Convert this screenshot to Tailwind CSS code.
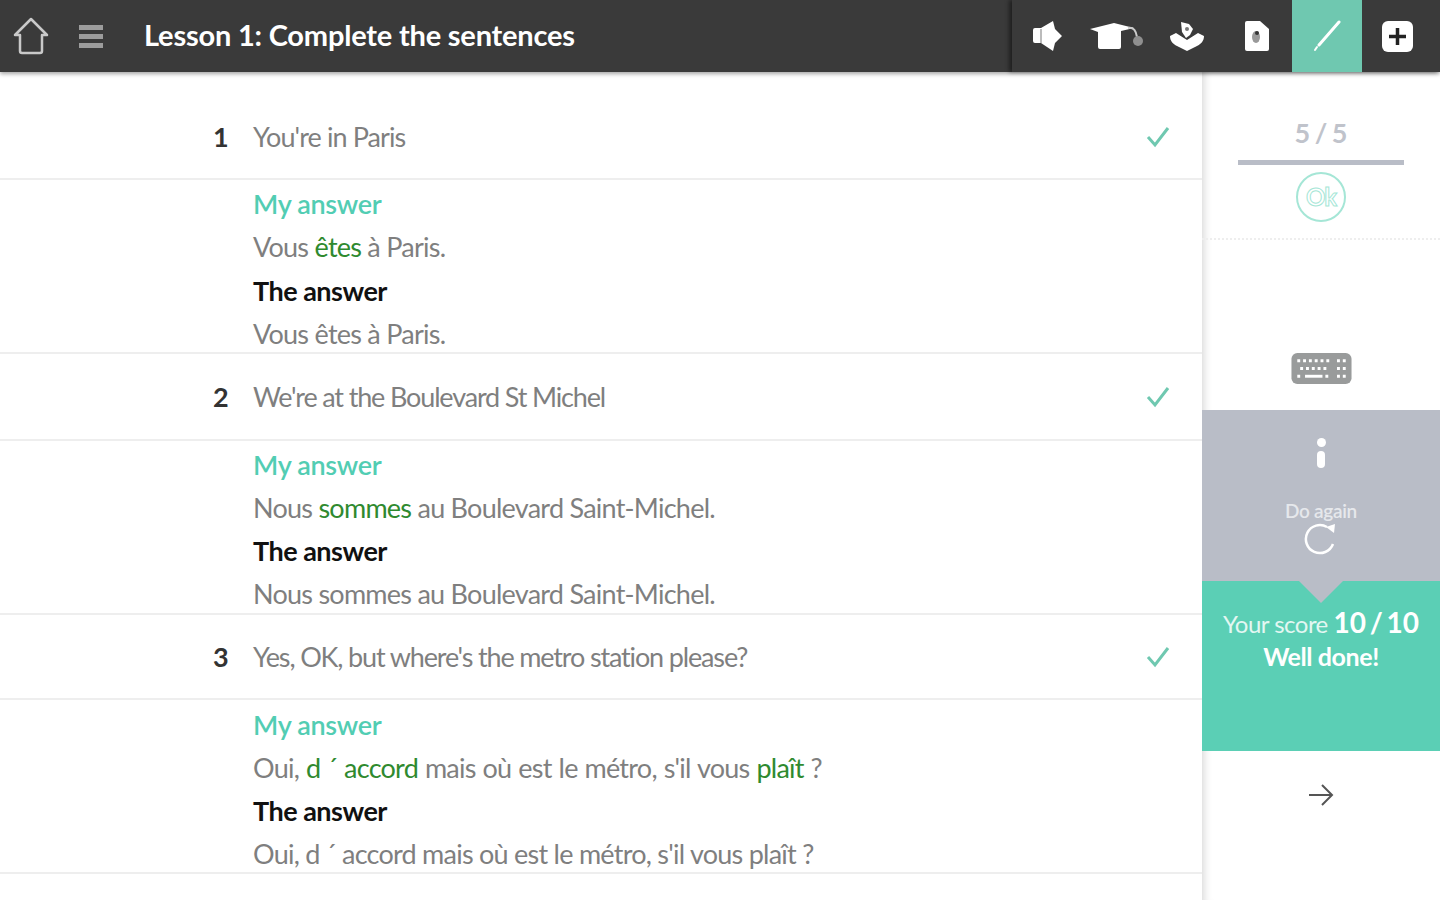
<!DOCTYPE html>
<html lang="en">
<head>
  <meta charset="UTF-8" />
  <title>Lesson 1: Complete the sentences</title>
  <script src="https://cdn.jsdelivr.net/npm/@tailwindcss/browser@4"></script>
</head>
<body class="bg-white font-['Lato',sans-serif] h-[900px] w-[1440px] overflow-hidden">
  <!-- Top bar -->
  <header class="relative z-10 flex h-[72px] bg-[#3a3a3a] shadow-[0_2px_4px_rgba(0,0,0,0.35)]">
    <div class="flex flex-1 items-center">
      <svg class="ml-[13px] w-[36px] h-[38px]" viewBox="0 0 36 38" fill="none" stroke="#c9c9c9" stroke-width="2.5" stroke-linejoin="round"><path d="M2 18 18 2l16 16h-5v16a2 2 0 0 1-2 2H9a2 2 0 0 1-2-2V18z"/></svg>
      <div class="ml-[30px] w-[24px] flex flex-col gap-[4px]">
        <div class="h-[5px] bg-[#9c9c9c]"></div>
        <div class="h-[5px] bg-[#9c9c9c]"></div>
        <div class="h-[5px] bg-[#9c9c9c]"></div>
      </div>
      <h1 class="ml-[41px] text-[29px] font-bold text-white tracking-[-0.2px] -mt-[2px]">Lesson 1: Complete the sentences</h1>
    </div>
    <nav class="flex w-[428px] shadow-[-3px_0_4px_rgba(0,0,0,0.45)]">
      <div class="w-[70px] flex items-center justify-center">
        <svg class="w-[30px] h-[30px]" viewBox="0 0 30 30" fill="#fff"><path d="M1 9a2 2 0 0 1 2-2h6l12-7 2 8 7 7-7 7-2 8-12-8H3a2 2 0 0 1-2-2z"/><path fill="#bbb" d="M8 8h2v14H8z"/></svg>
      </div>
      <div class="w-[70px] flex items-center justify-center">
        <svg class="w-[55px] h-[28px]" viewBox="0 0 55 28"><path fill="#fff" d="M0 7 24 1l20 5-13 3v16a2 2 0 0 1-2 2H10a2 2 0 0 1-2-2V10z"/><path fill="none" stroke="#ccc" stroke-width="2" d="M38 6c6-1 8 3 9 9"/><circle cx="48" cy="19" r="5" fill="#8f8f8f"/></svg>
      </div>
      <div class="w-[70px] flex items-center justify-center">
        <svg class="w-[34px] h-[30px]" viewBox="0 0 34 30"><path fill="#fff" d="M0 15l6-3 11 7 11-7 6 3c0 5-3 8-7 10l-10 5-10-5C3 23 0 20 0 15z"/><path fill="#fff" d="M11 1l8 2 4 5-3 6-4 3-4-6z"/><circle cx="17" cy="8" r="2" fill="#777"/></svg>
      </div>
      <div class="w-[70px] flex items-center justify-center">
        <svg class="w-[24px] h-[30px]" viewBox="0 0 24 30"><path fill="#fff" d="M2 0h13l9 8v20a2 2 0 0 1-2 2H2a2 2 0 0 1-2-2V2a2 2 0 0 1 2-2z"/><ellipse cx="11" cy="16" rx="4" ry="6" fill="#999"/><circle cx="12" cy="12" r="2" fill="#333"/></svg>
      </div>
      <div class="w-[70px] flex items-center justify-center bg-[#6fc8b0]">
        <svg class="w-[30px] h-[32px]" viewBox="0 0 30 32" fill="none" stroke="#fff" stroke-linecap="round"><path stroke-width="3" d="M27 2 7 25"/><path stroke-width="2" d="M5 27l-2 3"/></svg>
      </div>
      <div class="w-[70px] flex items-center justify-center">
        <div class="w-[31px] h-[31px] rounded-[6px] bg-white flex items-center justify-center">
          <svg class="w-[19px] h-[19px]" viewBox="0 0 19 19" stroke="#222" stroke-width="3.5"><path d="M9.5 1v17M1 9.500h17"/></svg>
        </div>
      </div>
    </nav>
  </header>

  <div class="flex h-[828px]">
    <!-- Corrections list -->
    <main class="w-[1202px] text-[27px] leading-[34px] tracking-[-0.75px] text-[#7f7f7f]">
      <section>
        <div class="flex items-center h-[108px] pl-[213px] pr-[32px] pt-[24px] border-b-2 border-[#eeeeee]">
          <span class="w-[40px] font-bold text-[#333]">1</span>
          <span class="flex-1 tracking-[-0.9px]">You're in Paris</span>
          <svg class="w-[24px] h-[22px]" viewBox="0 0 24 22" fill="none" stroke="#6fc8b0" stroke-width="3"><path d="M2 11l7 8L22 2"/></svg>
        </div>
        <div class="h-[174px] pl-[253px] pt-[7px] flex flex-col gap-[9px] border-b-2 border-[#eeeeee]">
          <div class="font-semibold text-[#52cdb3] tracking-[-0.3px]">My answer</div>
          <div>Vous <span class="text-[#2f8a2f]">êtes</span> à Paris.</div>
          <div class="mt-[1px] font-bold text-[#111] tracking-[-0.5px]">The answer</div>
          <div>Vous êtes à Paris.</div>
        </div>
      </section>
      <section>
        <div class="flex items-center h-[87px] pl-[213px] pr-[32px] border-b-2 border-[#eeeeee]">
          <span class="w-[40px] font-bold text-[#333]">2</span>
          <span class="flex-1 tracking-[-1.15px]">We're at the Boulevard St Michel</span>
          <svg class="w-[24px] h-[22px]" viewBox="0 0 24 22" fill="none" stroke="#6fc8b0" stroke-width="3"><path d="M2 11l7 8L22 2"/></svg>
        </div>
        <div class="h-[174px] pl-[253px] pt-[7px] flex flex-col gap-[9px] border-b-2 border-[#eeeeee]">
          <div class="font-semibold text-[#52cdb3] tracking-[-0.3px]">My answer</div>
          <div>Nous <span class="text-[#2f8a2f]">sommes</span> au Boulevard Saint-Michel.</div>
          <div class="font-bold text-[#111] tracking-[-0.5px]">The answer</div>
          <div>Nous sommes au Boulevard Saint-Michel.</div>
        </div>
      </section>
      <section>
        <div class="flex items-center h-[85px] pl-[213px] pr-[32px] border-b-2 border-[#eeeeee]">
          <span class="w-[40px] font-bold text-[#333]">3</span>
          <span class="flex-1 tracking-[-1.15px]">Yes, OK, but where's the metro station please?</span>
          <svg class="w-[24px] h-[22px]" viewBox="0 0 24 22" fill="none" stroke="#6fc8b0" stroke-width="3"><path d="M2 11l7 8L22 2"/></svg>
        </div>
        <div class="h-[174px] pl-[253px] pt-[8px] flex flex-col gap-[9px] border-b-2 border-[#eeeeee]">
          <div class="font-semibold text-[#52cdb3] tracking-[-0.3px]">My answer</div>
          <div class="[word-spacing:0.7px]">Oui, <span class="text-[#2f8a2f]">d ´ accord</span> mais où est le métro, s'il vous <span class="text-[#2f8a2f]">plaît</span> ?</div>
          <div class="font-bold text-[#111] tracking-[-0.5px]">The answer</div>
          <div>Oui, d ´ accord mais où est le métro, s'il vous plaît ?</div>
        </div>
      </section>
    </main>

    <!-- Side panel -->
    <aside class="w-[238px] flex flex-col shadow-[inset_10px_0_8px_-8px_rgba(0,0,0,0.16)]">
      <div class="h-[168px] flex flex-col items-center border-b-2 border-dotted border-[#eeeeee]">
        <div class="mt-[44px] h-[34px] leading-[34px] text-[27px] font-bold text-[#c0c3cb] [word-spacing:-2px]">5 / 5</div>
        <div class="w-[166px] h-[5px] mt-[10px] bg-[#b9bdc7]"></div>
        <div class="mt-[7px] w-[50px] h-[50px] rounded-full border-2 border-[#a5e6d6] flex items-center justify-center text-[24px] font-bold text-white [-webkit-text-stroke:1px_#a5e6d6] tracking-[-1px]">Ok</div>
      </div>
      <div class="h-[170px] flex items-center justify-center pt-[86px]">
        <svg class="w-[61px] h-[31px]" viewBox="0 0 62 32">
          <rect width="62" height="32" rx="6" fill="#999b9b"/>
          <path stroke="#fff" stroke-width="3" stroke-dasharray="3 3" d="M6 8h36M9 16h30M6 24h3M35 24h4M47 8h10M47 16h10M47 24h10"/>
          <path stroke="#fff" stroke-width="3" d="M14 24h18"/>
        </svg>
      </div>
      <div class="h-[171px] bg-[#b9bdc7] flex flex-col items-center text-white">
        <div class="mt-[28px] w-[9px] h-[9px] rounded-full bg-white"></div>
        <div class="mt-[4px] w-[8px] h-[17px] rounded-full bg-white"></div>
        <div class="mt-[31px] h-[24px] leading-[24px] text-[19px] font-semibold text-[#e6e8ec] tracking-[-0.3px]">Do again</div>
        <svg class="w-[36px] h-[34px] -mt-[2px]" viewBox="0 0 36 34" fill="none" stroke="#fff" stroke-width="2.500"><path d="M30 23A14 14 0 1 1 24 6"/><path fill="#fff" stroke="none" d="M23 6l9-3-1 9z"/></svg>
      </div>
      <div class="relative h-[170px] bg-[#5bcfb5] flex flex-col items-center text-white">
        <div class="absolute top-0 left-1/2 -translate-x-1/2 w-0 h-0 border-x-[22px] border-x-transparent border-t-[22px] border-t-[#b9bdc7]"></div>
        <div class="mt-[22px] h-[38px] leading-[38px] text-[24px] tracking-[-0.5px] text-[#e3f7f2] whitespace-nowrap">Your score <span class="text-[28px] font-bold text-white tracking-[0px] [word-spacing:-3px]">10 / 10</span></div>
        <div class="h-[30px] leading-[30px] text-[25px] font-bold tracking-[-0.4px]">Well done!</div>
      </div>
      <div class="h-[88px] flex items-center justify-center">
        <svg class="w-[26px] h-[22px]" viewBox="0 0 26 22" fill="none" stroke="#555" stroke-width="2"><path d="M1 11h23M14 1l10 10-10 10"/></svg>
      </div>
    </aside>
  </div>
</body>
</html>
